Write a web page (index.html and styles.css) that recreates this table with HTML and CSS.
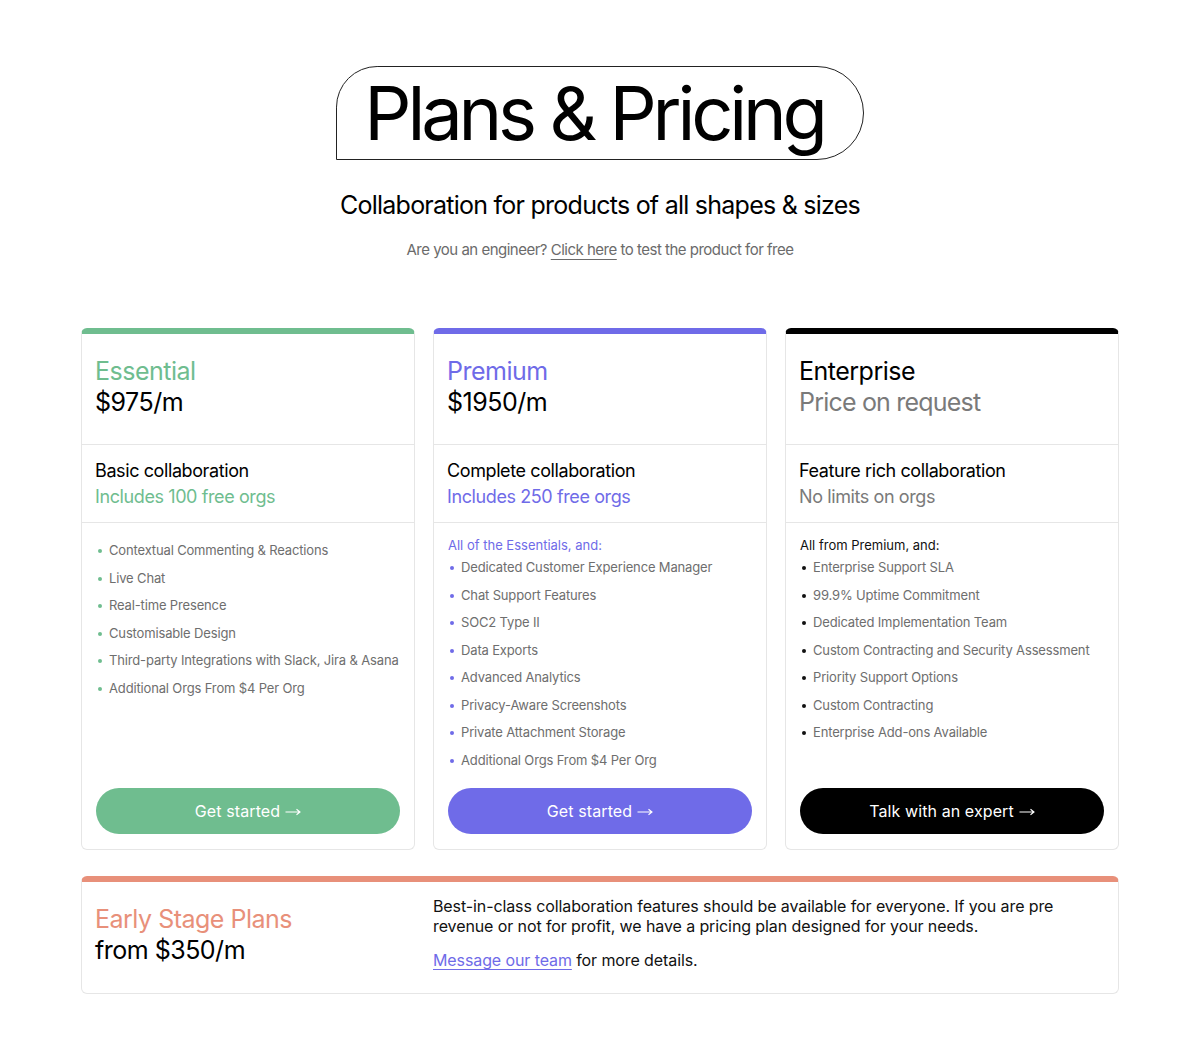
FILE: index.html
```html
<!DOCTYPE html>
<html>
<head>
<meta charset="utf-8">
<link rel="stylesheet" href="styles.css">
</head>
<body>
<main class="page">
  <header class="hero">
    <h1 class="title">Plans &amp; Pricing</h1>
    <p class="subtitle">Collaboration for products of all shapes &amp; sizes</p>
    <p class="eng">Are you an engineer? <a class="eng-link" href="#">Click here</a> to test the product for free</p>
  </header>

  <section class="plans">
    <article class="card card-green">
      <div class="sec head">
        <div class="plan-name">Essential</div>
        <div class="plan-price">$975/m</div>
      </div>
      <div class="sec sub">
        <div class="sub-title">Basic collaboration</div>
        <div class="sub-note">Includes 100 free orgs</div>
      </div>
      <div class="sec feats">
        <ul class="list">
          <li>Contextual Commenting &amp; Reactions</li>
          <li>Live Chat</li>
          <li>Real-time Presence</li>
          <li>Customisable Design</li>
          <li>Third-party Integrations with Slack, Jira &amp; Asana</li>
          <li>Additional Orgs From $4 Per Org</li>
        </ul>
        <a class="btn" href="#">Get started <svg class="arrow" viewBox="0 0 16 8" width="16" height="8"><path d="M0.5 4H15M11.5 1.2L15 4L11.5 6.8" fill="none" stroke="currentColor" stroke-width="1.1"/></svg></a>
      </div>
    </article>

    <article class="card card-purple">
      <div class="sec head">
        <div class="plan-name">Premium</div>
        <div class="plan-price">$1950/m</div>
      </div>
      <div class="sec sub">
        <div class="sub-title">Complete collaboration</div>
        <div class="sub-note">Includes 250 free orgs</div>
      </div>
      <div class="sec feats">
        <div class="list-head">All of the Essentials, and:</div>
        <ul class="list">
          <li>Dedicated Customer Experience Manager</li>
          <li>Chat Support Features</li>
          <li>SOC2 Type II</li>
          <li>Data Exports</li>
          <li>Advanced Analytics</li>
          <li>Privacy-Aware Screenshots</li>
          <li>Private Attachment Storage</li>
          <li>Additional Orgs From $4 Per Org</li>
        </ul>
        <a class="btn" href="#">Get started <svg class="arrow" viewBox="0 0 16 8" width="16" height="8"><path d="M0.5 4H15M11.5 1.2L15 4L11.5 6.8" fill="none" stroke="currentColor" stroke-width="1.1"/></svg></a>
      </div>
    </article>

    <article class="card card-black">
      <div class="sec head">
        <div class="plan-name">Enterprise</div>
        <div class="plan-price">Price on request</div>
      </div>
      <div class="sec sub">
        <div class="sub-title">Feature rich collaboration</div>
        <div class="sub-note">No limits on orgs</div>
      </div>
      <div class="sec feats">
        <div class="list-head">All from Premium, and:</div>
        <ul class="list">
          <li>Enterprise Support SLA</li>
          <li>99.9% Uptime Commitment</li>
          <li>Dedicated Implementation Team</li>
          <li>Custom Contracting and Security Assessment</li>
          <li>Priority Support Options</li>
          <li>Custom Contracting</li>
          <li>Enterprise Add-ons Available</li>
        </ul>
        <a class="btn" href="#">Talk with an expert <svg class="arrow" viewBox="0 0 16 8" width="16" height="8"><path d="M0.5 4H15M11.5 1.2L15 4L11.5 6.8" fill="none" stroke="currentColor" stroke-width="1.1"/></svg></a>
      </div>
    </article>
  </section>

  <section class="early">
    <div class="early-left">
      <div class="early-name">Early Stage Plans</div>
      <div class="early-price">from $350/m</div>
    </div>
    <div class="early-right">
      <p class="early-text">Best-in-class collaboration features should be available for everyone. If you are pre revenue or not for profit, we have a pricing plan designed for your needs.</p>
      <p class="early-text"><a class="early-link" href="#">Message our team</a> for more details.</p>
    </div>
  </section>
</main>
</body>
</html>
```

FILE: styles.css
```css
* { box-sizing: border-box; }
html, body { margin: 0; padding: 0; background: #fff; }
body {
  font-family: Inter, "Liberation Sans", Arial, sans-serif;
  color: #000;
}
.page {
  width: 1038px;
  margin: 0 auto;
  padding-top: 66px;
}
.hero {
  display: flex;
  flex-direction: column;
  align-items: center;
}
.title {
  margin: 0;
  width: 528px;
  height: 94px;
  border: 1px solid #222;
  border-radius: 42px 48px 48px 0;
  font-size: 74px;
  font-weight: 400;
  letter-spacing: -4.2px;
  line-height: 92px;
  text-align: center;
  padding-right: 12px;
}
.subtitle {
  margin: 29px 0 0;
  font-size: 25px;
  letter-spacing: -0.75px;
  line-height: 32px;
}
.eng {
  margin: 19px 0 0;
  font-size: 15px;
  color: #6b6b6b;
  letter-spacing: -0.5px;
  line-height: 20px;
}
.eng-link {
  color: #6b6b6b;
  text-decoration: underline;
  text-underline-offset: 4px;
  text-decoration-thickness: 1px;
}

.plans {
  margin-top: 68px;
  display: grid;
  grid-template-columns: repeat(3, 334px);
  column-gap: 18px;
}
.card {
  display: flex;
  flex-direction: column;
  border: 1px solid #e6e6e6;
  border-top: 6px solid #000;
  border-radius: 6px;
  height: 522px;
}
.card-green { border-top-color: #6fbd8f; }
.card-purple { border-top-color: #6f6be8; }
.card-black { border-top-color: #000; }
.sec { padding: 0 14px 0 13px; }
.head {
  height: 111px;
  border-bottom: 1px solid #e6e6e6;
  padding-top: 22px;
}
.plan-name, .plan-price {
  font-size: 25px;
  line-height: 31px;
  letter-spacing: -0.5px;
}
.card-black .plan-price { letter-spacing: -0.8px; }
.card-green .plan-name, .card-green .sub-note { color: #6fbd8f; }
.card-purple .plan-name, .card-purple .sub-note { color: #6f6be8; }
.card-black .plan-price, .card-black .sub-note { color: #7a7a7a; }
.sub {
  height: 78px;
  border-bottom: 1px solid #e6e6e6;
  padding-top: 13px;
}
.sub-title, .sub-note {
  font-size: 18px;
  line-height: 26px;
  letter-spacing: -0.4px;
}
.feats {
  flex: 1;
  display: flex;
  flex-direction: column;
  padding-top: 14px;
  padding-bottom: 15px;
  padding-left: 14px;
  padding-right: 14px;
}
.list-head {
  font-size: 13px;
  line-height: 17px;
}
.card-purple .list-head { color: #6f6be8; }
.card-black .list-head { color: #111; }
.list {
  list-style: none;
  margin: 0;
  padding: 0;
}
.list li {
  position: relative;
  padding-left: 13px;
  font-size: 13px;
  line-height: 27.5px;
  color: #6e6e6e;
  letter-spacing: -0.15px;
  white-space: nowrap;
}
.list li::before {
  content: "";
  position: absolute;
  left: 2px;
  top: 12px;
  width: 4px;
  height: 4px;
  border-radius: 50%;
  background: #000;
}
.card-green .list li::before { background: #6fbd8f; }
.card-purple .list li::before { background: #6f6be8; }
.card-black .list li::before { background: #111; }
.btn {
  margin-top: auto;
  display: flex;
  align-items: center;
  justify-content: center;
  gap: 5px;
  height: 46px;
  border-radius: 23px;
  color: #fff;
  font-size: 16px;
  letter-spacing: 0.1px;
  text-decoration: none;
}
.arrow { display: block; margin-top: 1px; }
.card-green .btn { background: #6fbd8f; }
.card-purple .btn { background: #6f6be8; }
.card-black .btn { background: #000; }

.early {
  margin-top: 26px;
  display: grid;
  grid-template-columns: 337px 1fr;
  border: 1px solid #e6e6e6;
  border-top: 6px solid #e8907a;
  border-radius: 6px;
  height: 118px;
  padding: 14px 14px 0 13px;
}
.early-name {
  margin-top: 8px;
  font-size: 25px;
  line-height: 31px;
  color: #e8907a;
  letter-spacing: -0.5px;
}
.early-price {
  font-size: 25px;
  line-height: 31px;
  letter-spacing: -0.5px;
}
.early-right { padding-left: 1px; }
.early-text {
  margin: 0 0 14px;
  font-size: 16px;
  line-height: 20px;
  letter-spacing: -0.1px;
  color: #111;
}
.early-link {
  color: #6f6be8;
  text-decoration: underline;
  text-underline-offset: 3px;
}
```
